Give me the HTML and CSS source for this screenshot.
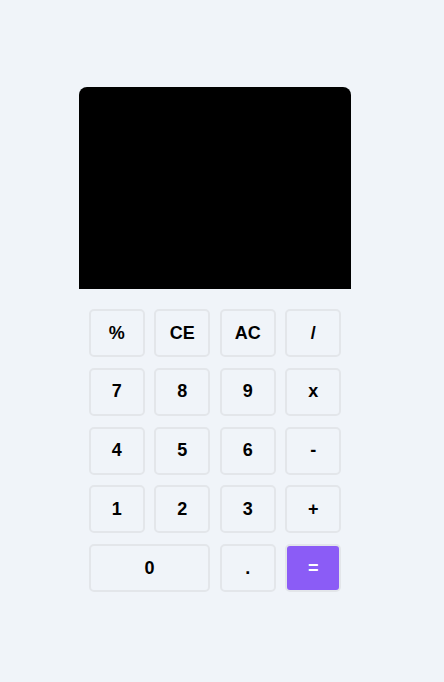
FILE: index.html
```html
<!DOCTYPE html>
<html>
<head>
<meta charset="utf-8">
<link rel="stylesheet" href="styles.css">
</head>
<body>
<div class="calc">
  <div class="display"></div>
  <div class="keys">
    <button class="key">%</button>
    <button class="key">CE</button>
    <button class="key">AC</button>
    <button class="key">/</button>
    <button class="key">7</button>
    <button class="key">8</button>
    <button class="key">9</button>
    <button class="key">x</button>
    <button class="key">4</button>
    <button class="key">5</button>
    <button class="key">6</button>
    <button class="key">-</button>
    <button class="key">1</button>
    <button class="key">2</button>
    <button class="key">3</button>
    <button class="key">+</button>
    <button class="key wide">0</button>
    <button class="key">.</button>
    <button class="key equals">=</button>
  </div>
</div>
</body>
</html>
```
FILE: styles.css
```css
html, body {
  margin: 0;
  padding: 0;
  background: #f0f4f9;
  height: 100%;
}
body {
  font-family: "Liberation Sans", Arial, sans-serif;
}
.calc {
  width: 272px;
  margin: 87px 0 0 79px;
}
.display {
  height: 202px;
  background: #000;
  border-radius: 8px 8px 0 0;
}
.keys {
  display: grid;
  grid-template-columns: repeat(4, 1fr);
  column-gap: 9.7px;
  row-gap: 10.75px;
  padding: 20px 10px 0 10px;
}
.key {
  height: 48px;
  box-sizing: border-box;
  border: 2px solid #e3e6ea;
  border-radius: 5px;
  background: #f0f4f9;
  font-family: "Liberation Sans", Arial, sans-serif;
  font-weight: bold;
  font-size: 18px;
  color: #000;
  padding: 0;
}
.wide {
  grid-column: span 2;
}
.equals {
  background: #8b5cf6;
  color: #fff;
}
```
